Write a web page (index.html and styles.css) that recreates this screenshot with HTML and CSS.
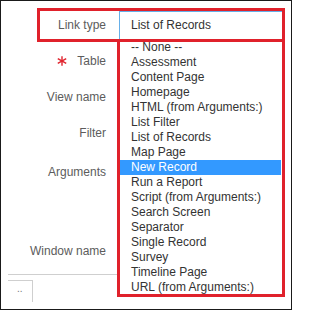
FILE: index.html
```html
<!DOCTYPE html>
<html>
<head>
<meta charset="utf-8">
<link rel="stylesheet" href="styles.css">
</head>
<body>
<div class="frame">
  <div class="form">
    <div class="row">
      <div class="label">Link type</div>
      <div class="input focus">List of Records</div>
    </div>
    <div class="row">
      <div class="label"><svg class="star" viewBox="0 0 10 10" width="10" height="10"><g stroke="#e0242e" stroke-width="1.4" stroke-linecap="butt"><line x1="5" y1="0.2" x2="5" y2="9.8"/><line x1="0.8" y1="2.6" x2="9.2" y2="7.4"/><line x1="0.8" y1="7.4" x2="9.2" y2="2.6"/></g></svg>Table</div>
      <div class="input"></div>
    </div>
    <div class="row">
      <div class="label">View name</div>
      <div class="input"></div>
    </div>
    <div class="row">
      <div class="label">Filter</div>
      <div class="input"></div>
    </div>
    <div class="row tall">
      <div class="label top">Arguments</div>
      <div class="input"></div>
    </div>
    <div class="row">
      <div class="label">Window name</div>
      <div class="input"></div>
    </div>
    <div class="separator"></div>
    <div class="tab">..</div>
  </div>

  <ul class="listbox">
    <li>-- None --</li>
    <li>Assessment</li>
    <li>Content Page</li>
    <li>Homepage</li>
    <li>HTML (from Arguments:)</li>
    <li>List Filter</li>
    <li>List of Records</li>
    <li>Map Page</li>
    <li class="selected">New Record</li>
    <li>Run a Report</li>
    <li>Script (from Arguments:)</li>
    <li>Search Screen</li>
    <li>Separator</li>
    <li>Single Record</li>
    <li>Survey</li>
    <li>Timeline Page</li>
    <li>URL (from Arguments:)</li>
  </ul>

  <div class="mark mark-type"></div>
  <div class="mark mark-list"></div>
</div>
</body>
</html>
```

FILE: styles.css
```css
html, body {
  margin: 0;
  padding: 0;
  background: #fff;
}

.frame {
  position: relative;
  width: 292px;
  height: 310px;
  box-sizing: border-box;
  border: 1px solid #1a1a1a;
  overflow: hidden;
  font-family: "Liberation Sans", Arial, sans-serif;
  font-size: 12px;
}

.form {
  padding: 10px 0 0 7px;
}

.row {
  display: grid;
  grid-template-columns: 98px 163px;
  column-gap: 13px;
  height: 28px;
  margin-bottom: 8px;
}

.row.tall {
  height: 74px;
}

.label {
  text-align: right;
  line-height: 28px;
  color: #5c5c5c;
  white-space: nowrap;
}

.label.top {
  padding-top: 3px;
}

.star {
  width: 10px;
  height: 10px;
  margin-right: 10px;
  vertical-align: -1px;
}

.input {
  box-sizing: border-box;
  height: 28px;
  line-height: 26px;
  padding-left: 11px;
  color: #333;
  background: #fff;
}

.input.focus {
  border-top: 1px solid #66afe9;
  border-left: 1px solid #66afe9;
}

.separator {
  width: 240px;
  margin-top: 9px;
  border-top: 1px solid #cfcfcf;
}

.tab {
  box-sizing: border-box;
  width: 25px;
  height: 22px;
  margin-top: 5px;
  border-top: 1px solid #cfcfcf;
  border-right: 1px solid #cfcfcf;
  color: #777;
  font-size: 10px;
  line-height: 14px;
  padding-left: 9px;
  padding-top: 1px;
}

.listbox {
  position: absolute;
  left: 118px;
  top: 39px;
  width: 162px;
  margin: 0;
  padding: 0;
  list-style: none;
  background: #fff;
}

.listbox li {
  height: 15px;
  line-height: 15px;
  padding-left: 12px;
  color: #333;
  white-space: nowrap;
}

.listbox li.selected {
  background: #3399ff;
  color: #fff;
}

.mark {
  position: absolute;
  box-sizing: border-box;
  border: 3px solid #e0212b;
  pointer-events: none;
}

.mark-type {
  left: 36px;
  top: 7px;
  width: 248px;
  height: 34px;
}

.mark-list {
  left: 116px;
  top: 38px;
  width: 168px;
  height: 258px;
}
```
